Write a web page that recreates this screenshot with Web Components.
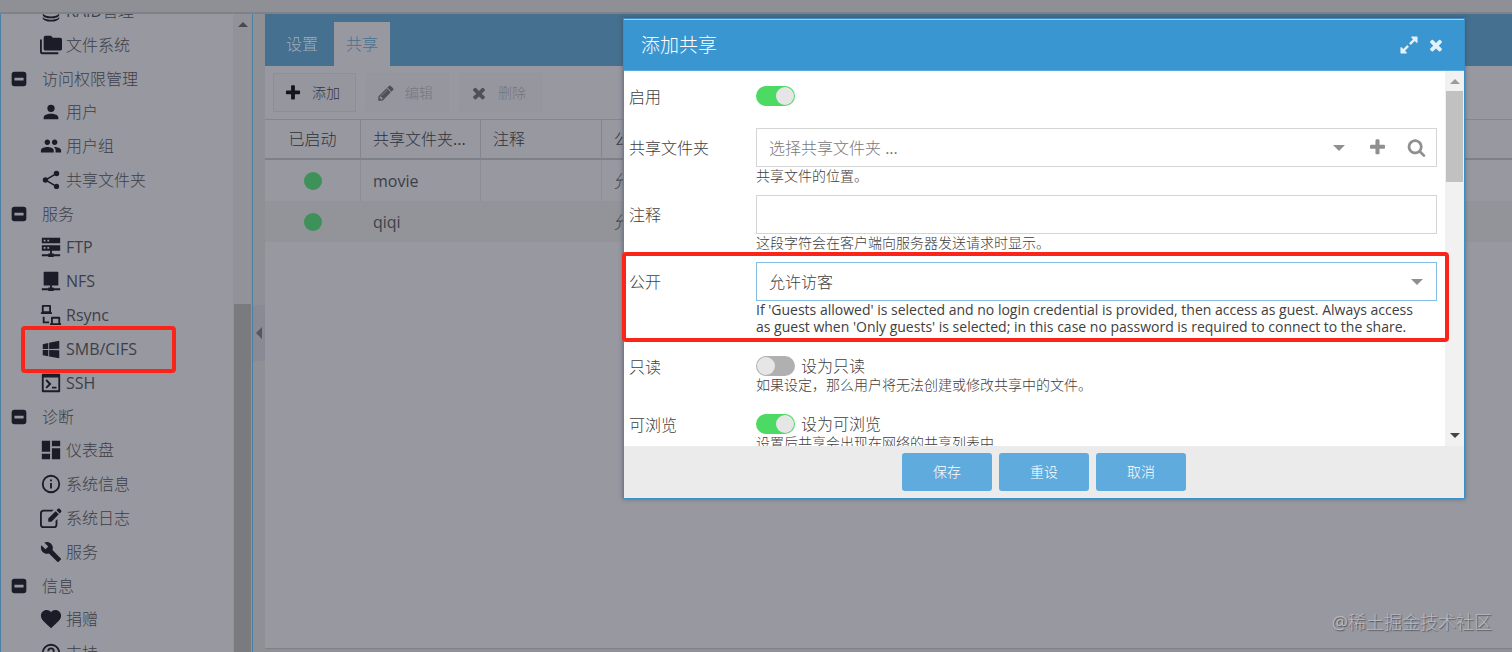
<!DOCTYPE html>
<html lang="zh-CN">
<head>
<meta charset="utf-8">
<title>SMB/CIFS</title>
<style>
  html, body {
    height: 100%;
    margin: 0;
  }

  body {
    font: 16px/24px "Open Sans", "Noto Sans CJK SC Light", "Noto Sans CJK SC DemiLight", "Noto Sans CJK SC", sans-serif;
    background-color: #8e9095;
    color: #3d3f48;
    overflow: hidden;
  }
</style>
</head>
<body>
<nas-workspace></nas-workspace>

<script>
const ICONS = {
  database: [24, 'M12 2C7.6 2 4 3.8 4 6s3.600 4 8 4 8-1.800 8-4-3.600-4-8-4M4 8.500v2.500c0 2.200 3.600 4 8 4s8-1.800 8-4V8.500c0 2.200-3.600 4-8 4s-8-1.800-8-4M3 14v2c0 2.400 4 4 9 4s9-1.600 9-4v-2c0 2.200-4 4-9 4s-9-1.800-9-4M3 18.500v1c0 2.200 4 4 9 4s9-1.800 9-4v-1c-1 1.900-5 3-9 3s-8-1.100-9-3'],
  folders: [24, 'M22,4H14L12,2H6A2,2 0 0,0 4,4V16A2,2 0 0,0 6,18H22A2,2 0 0,0 24,16V6A2,2 0 0,0 22,4M2,6H0V20A2,2 0 0,0 2,22H20V20H2V6Z'],
  collapse: [24, 'M7 4h10a3 3 0 0 1 3 3v10a3 3 0 0 1-3 3H7a3 3 0 0 1-3-3V7a3 3 0 0 1 3-3M7 10.500v3h10v-3Z'],
  user: [24, 'M12,4A4,4 0 0,1 16,8A4,4 0 0,1 12,12A4,4 0 0,1 8,8A4,4 0 0,1 12,4M12,14C16.42,14 20,15.79 20,18V20H4V18C4,15.79 7.58,14 12,14Z'],
  group: [24, 'M16 11c1.660 0 2.990-1.340 2.990-3S17.660 5 16 5c-1.660 0-3 1.340-3 3s1.340 3 3 3zm-8 0c1.660 0 2.990-1.340 2.990-3S9.660 5 8 5C6.340 5 5 6.340 5 8s1.340 3 3 3zm0 2c-2.330 0-7 1.170-7 3.500V19h14v-2.500c0-2.330-4.670-3.500-7-3.500zm8 0c-.29 0-.62.02-.97.05 1.160.84 1.970 1.970 1.970 3.450V19h6v-2.500c0-2.330-4.670-3.500-7-3.500z'],
  share: [24, 'M18,16.08C17.24,16.08 16.56,16.38 16.04,16.85L8.91,12.7C8.96,12.47 9,12.24 9,12C9,11.76 8.96,11.53 8.91,11.3L15.96,7.19C16.5,7.69 17.21,8 18,8A3,3 0 0,0 21,5A3,3 0 0,0 18,2A3,3 0 0,0 15,5C15,5.24 15.04,5.47 15.09,5.7L8.04,9.81C7.5,9.31 6.79,9 6,9A3,3 0 0,0 3,12A3,3 0 0,0 6,15C6.79,15 7.5,14.69 8.04,14.19L15.16,18.34C15.11,18.55 15.08,18.77 15.08,19C15.08,20.61 16.39,21.91 18,21.91C19.61,21.91 20.92,20.61 20.92,19A2.92,2.92 0 0,0 18,16.08Z'],
  ftp: [24, 'M2 2h20v6H2ZM4 4v2h2V4ZM8 4v2h2V4ZM2 10h20v6H2ZM4 12v2h2v-2ZM8 12v2h2v-2ZM11 16h2v3h2v1h7v2h-7v1H9v-1H2v-2h7v-1h2Z'],
  nfs: [24, 'M5 2h14a1 1 0 0 1 1 1v13a1 1 0 0 1-1 1h-6v2h2v1h7v2h-7v1H9v-1H2v-2h7v-1h2v-2H5a1 1 0 0 1-1-1V3a1 1 0 0 1 1-1Z'],
  rsync: [24, 'M3 1h8a1 1 0 0 1 1 1v7h1v2H1V9h1V2a1 1 0 0 1 1-1M4 3v5h6V3ZM3 14h2v5h5v2H3ZM13 14h8a1 1 0 0 1 1 1v6h1v2H11v-2h1v-6a1 1 0 0 1 1-1M14 16v5h6v-5Z'],
  windows: [24, 'M3,12V6.75L9,5.43V11.91L3,12M21,3V11.75L10,11.9V5.21L21,3M3,13L9,13.09V19.9L3,18.75V13M21,13.25V22L10,20.09V13.1L21,13.25Z'],
  terminal: [24, 'M3 2h18a1 1 0 0 1 1 1v18a1 1 0 0 1-1 1H3a1 1 0 0 1-1-1V3a1 1 0 0 1 1-1M4 6v14h16V6ZM6 9.500l1.500-1.500 5 5-5 5-1.500-1.500 3.500-3.500ZM13 16h5v2h-5Z'],
  dashboard: [24, 'M13,2V8H22V2M13,22H22V10H13M2,22H11V16H2M2,14H11V2H2V14Z'],
  info: [24, 'M11 9h2V7h-2M12 20a8 8 0 1 1 0-16 8 8 0 0 1 0 16M12 2a10 10 0 1 0 0 20 10 10 0 0 0 0-20M11 17h2v-6h-2Z'],
  edit: [24, 'M4 3h11l-2 2H4a2 2 0 0 0-2 2v12a2 2 0 0 0 2 2h11a2 2 0 0 0 2-2v-4l2-2v6a4 4 0 0 1-4 4H4a4 4 0 0 1-4-4V7a4 4 0 0 1 4-4M9 12.500 17 4.500l3.500 3.500-8 8H9ZM18 3.500l1.500-1.500q1-.8 2 0l1.500 1.500q.8 1 0 2L21.500 7Z'],
  wrench: [24, 'M22.7,19L13.6,9.9C14.5,7.6 14,4.9 12.1,3C10.1,1 7.1,0.6 4.7,1.7L9,6L6,9L1.6,4.7C0.4,7.1 0.9,10.1 2.9,12.1C4.8,14 7.5,14.5 9.8,13.6L18.9,22.7C19.3,23.1 19.9,23.1 20.3,22.7L22.6,20.4C23.1,20 23.1,19.3 22.7,19Z'],
  heart: [24, 'M12,22L10.55,20.6C5,15.7 1,12.6 1,8.5C1,5 3.8,2.300 7.2,2.300C9.1,2.300 10.91,3.2 12,4.6C13.09,3.2 14.9,2.300 16.8,2.300C20.2,2.300 23,5 23,8.5C23,12.6 19,15.7 13.45,20.6L12,22Z'],
  help: [24, 'M11,18H13V16H11V18M12,2A10,10 0 0,0 2,12A10,10 0 0,0 12,22A10,10 0 0,0 22,12A10,10 0 0,0 12,2M12,20C7.59,20 4,16.41 4,12C4,7.59 7.59,4 12,4C16.41,4 20,7.59 20,12C20,16.41 16.41,20 12,20M12,6A4,4 0 0,0 8,10H10A2,2 0 0,1 12,8A2,2 0 0,1 14,10C14,12 11,11.75 11,15H13C13,12.75 16,12.5 16,10A4,4 0 0,0 12,6Z'],
  plus: [1792, 'M1600 736v192q0 40-28 68t-68 28h-416v416q0 40-28 68t-68 28h-192q-40 0-68-28t-28-68v-416h-416q-40 0-68-28t-28-68v-192q0-40 28-68t68-28h416v-416q0-40 28-68t68-28h192q40 0 68 28t28 68v416h416q40 0 68 28t28 68z'],
  pencil: [1792, 'M491 1536l91-91-235-235-91 91v107h128v128h107zm523-928q0-22-22-22-10 0-17 7l-542 542q-7 7-7 17 0 22 22 22 10 0 17-7l542-542q7-7 7-17zm-54-192l416 416-832 832h-416v-416zm683 96q0 53-37 90l-166 166-416-416 166-165q36-38 90-38 53 0 91 38l235 234q37 39 37 91z'],
  times: [1792, 'M1490 1322q0 40-28 68l-136 136q-28 28-68 28t-68-28l-294-294-294 294q-28 28-68 28t-68-28l-136-136q-28-28-28-68t28-68l294-294-294-294q-28-28-28-68t28-68l136-136q28-28 68-28t68 28l294 294 294-294q28-28 68-28t68 28l136 136q28 28 28 68t-28 68l-294 294 294 294q28 28 28 68z'],
  search: [1792, 'M1216 832q0-185-131.500-316.500t-316.500-131.500-316.500 131.500-131.500 316.500 131.500 316.500 316.500 131.500 316.500-131.500 131.500-316.500zm512 832q0 52-38 90t-90 38q-54 0-90-38l-343-342q-179 124-399 124-143 0-273.500-55.500t-225-150-150-225-55.500-273.500 55.500-273.500 150-225 225-150 273.500-55.500 273.500 55.500 225 150 150 225 55.500 273.500q0 220-124 399l343 343q37 37 37 90z'],
  expand: [1792, 'M883 1056q0 13-10 23l-332 332 144 144q19 19 19 45t-19 45-45 19h-448q-26 0-45-19t-19-45v-448q0-26 19-45t45-19 45 19l144 144 332-332q10-10 23-10t23 10l114 114q10 10 10 23zm781-864v448q0 26-19 45t-45 19-45-19l-144-144-332 332q-10 10-23 10t-23-10l-114-114q-10-10-10-23t10-23l332-332-144-144q-19-19-19-45t19-45 45-19h448q26 0 45 19t19 45z'],
  caret: [12, 'M0 3h12l-6 6Z'],
  up: [12, 'M1 9h10L6 4Z'],
  left: [12, 'M9 0v12L3 6Z'],
};

class NasIcon extends HTMLElement {
  connectedCallback() {
    const [box, path] = ICONS[this.getAttribute('name')];
    const size = this.getAttribute('size') || 22;
    this.attachShadow({ mode: 'open' }).innerHTML = `
    <style>
      :host { display: inline-flex; flex: none; }
      svg { display: block; fill: currentColor; fill-rule: evenodd; }
    </style>
    <svg width="${size}" height="${size}" viewBox="0 0 ${box} ${box}" aria-hidden="true"><path d="${path}"/></svg>`;
  }
}
customElements.define('nas-icon', NasIcon);

class ScrollRail extends HTMLElement {
  connectedCallback() {
    this.attachShadow({ mode: 'open' }).innerHTML = `
    <style>
      :host {
        display: flex;
        flex-direction: column;
        align-items: center;
        flex: none;
        width: 19px;
        background-color: var(--rail);
      }
      .cap {
        display: flex;
        align-items: center;
        justify-content: center;
        height: 20px;
        color: var(--cap);
      }
      .cap.end { color: #444; transform: scaleY(-1); }
      .gap { flex: var(--before, 0); }
      .thumb { flex: var(--size, 1); width: 17px; background-color: var(--thumb); }
      .rest { flex: var(--after, 0); }
    </style>
    <div class="cap"><nas-icon name="up" size="12"></nas-icon></div>
    <div class="gap"></div>
    <div class="thumb"></div>
    <div class="rest"></div>
    ${this.hasAttribute('end-cap') ? '<div class="cap end"><nas-icon name="up" size="12"></nas-icon></div>' : ''}`;
  }
}
customElements.define('scroll-rail', ScrollRail);

class NavItem extends HTMLElement {
  connectedCallback() {
    this.attachShadow({ mode: 'open' }).innerHTML = `
    <style>
      :host { display: block; position: relative; }
      a {
        display: flex;
        align-items: center;
        gap: 4px;
        height: 34px;
        padding-left: 39px;
        color: inherit;
        text-decoration: none;
      }
      nas-icon { color: #1a1c27; }
      :host([group]) a { gap: 12px; height: 33px; padding-left: 7px; }
      :host([marked])::after {
        content: "";
        position: absolute;
        inset: -6px 57px -7px 20px;
        border: 4px solid #fb2419;
        border-radius: 4px;
      }
    </style>
    <a href="#"><nas-icon name="${this.getAttribute('icon') || 'collapse'}"></nas-icon><slot></slot></a>`;
  }
}
customElements.define('nav-item', NavItem);

class NavPanel extends HTMLElement {
  connectedCallback() {
    this.attachShadow({ mode: 'open' }).innerHTML = `
    <style>
      :host {
        display: flex;
        width: 253px;
        flex: none;
        box-sizing: border-box;
        overflow: hidden;
        background-color: #9798a0;
        border: solid #4b7ea3;
        border-width: 0 1px;
      }
      nav { flex: 1; margin-top: -20px; }
      scroll-rail {
        --rail: #929399;
        --cap: #484a50;
        --thumb: #797b7e;
        --before: 270;
        --size: 348;
      }
    </style>
    <nav>
      <nav-item icon="database">RAID管理</nav-item>
      <nav-item icon="folders">文件系统</nav-item>
      <nav-item group>访问权限管理</nav-item>
      <nav-item icon="user">用户</nav-item>
      <nav-item icon="group">用户组</nav-item>
      <nav-item icon="share">共享文件夹</nav-item>
      <nav-item group>服务</nav-item>
      <nav-item icon="ftp">FTP</nav-item>
      <nav-item icon="nfs">NFS</nav-item>
      <nav-item icon="rsync">Rsync</nav-item>
      <nav-item icon="windows" marked>SMB/CIFS</nav-item>
      <nav-item icon="terminal">SSH</nav-item>
      <nav-item group>诊断</nav-item>
      <nav-item icon="dashboard">仪表盘</nav-item>
      <nav-item icon="info">系统信息</nav-item>
      <nav-item icon="edit">系统日志</nav-item>
      <nav-item icon="wrench">服务</nav-item>
      <nav-item group>信息</nav-item>
      <nav-item icon="heart">捐赠</nav-item>
      <nav-item icon="help">支持</nav-item>
    </nav>
    <scroll-rail></scroll-rail>`;
  }
}
customElements.define('nav-panel', NavPanel);

class ToolButton extends HTMLElement {
  connectedCallback() {
    this.attachShadow({ mode: 'open' }).innerHTML = `
    <style>
      :host { display: block; }
      button {
        display: flex;
        align-items: center;
        gap: 10px;
        height: 39px;
        padding: 0 15px 0 10px;
        border: 1px solid #8e8f96;
        background-color: #96979e;
        font: inherit;
        font-size: 14px;
        color: #33353e;
      }
      nas-icon { color: #14161e; }
      button:disabled { border-color: #95969d; color: #75767d; }
      button:disabled nas-icon { color: #505158; }
    </style>
    <button type="button" ${this.hasAttribute('disabled') ? 'disabled' : ''}>
      <nas-icon name="${this.getAttribute('icon')}" size="18"></nas-icon><slot></slot>
    </button>`;
  }
}
customElements.define('tool-button', ToolButton);

class SharePanel extends HTMLElement {
  connectedCallback() {
    this.attachShadow({ mode: 'open' }).innerHTML = `
    <style>
      :host {
        display: flex;
        flex-direction: column;
        flex: 1;
        min-width: 0;
        background-color: #9798a0;
        border-bottom: 1px solid #7f8188;
      }
      .tabs {
        display: flex;
        align-items: flex-end;
        gap: 4px;
        height: 52px;
        padding-left: 9px;
        background-color: #46708f;
      }
      .tabs button {
        width: 56px;
        height: 44px;
        padding: 0;
        border: 0;
        background: none;
        font: inherit;
        color: #9fadbb;
      }
      .tabs button[aria-selected="true"] { background-color: #9798a0; color: #46708f; }
      .tools { display: flex; gap: 10px; padding: 7px 8px; }
      table {
        width: 100%;
        border-collapse: separate;
        border-spacing: 0;
        table-layout: fixed;
        border-top: 1px solid #84868c;
      }
      th, td {
        height: 41px;
        box-sizing: border-box;
        padding: 0 12px;
        border-right: 1px solid #8c8e95;
        font-weight: 400;
        text-align: left;
        white-space: nowrap;
        overflow: hidden;
      }
      th { height: 40px; border-right-color: #84868c; border-bottom: 2px solid #7e8087; color: #2f313a; }
      th:last-child, td:last-child { border-right: 0; }
      th:first-child, td:first-child { text-align: center; }
      tbody tr + tr td { background-color: #929499; border-right-color: #929499; }
      .on {
        display: block;
        width: 18px;
        height: 18px;
        margin: auto;
        border-radius: 50%;
        background-color: #3d9159;
      }
    </style>
    <div class="tabs" role="tablist">
      <button type="button" role="tab">设置</button>
      <button type="button" role="tab" aria-selected="true">共享</button>
    </div>
    <div class="tools">
      <tool-button icon="plus">添加</tool-button>
      <tool-button icon="pencil" disabled>编辑</tool-button>
      <tool-button icon="times" disabled>删除</tool-button>
    </div>
    <table>
      <colgroup><col width="96"><col width="120"><col width="121"><col></colgroup>
      <thead><tr><th>已启动</th><th>共享文件夹...</th><th>注释</th><th>公开</th></tr></thead>
      <tbody>
        <tr><td><span class="on"></span></td><td>movie</td><td></td><td>允许访客</td></tr>
        <tr><td><span class="on"></span></td><td>qiqi</td><td></td><td>允许访客</td></tr>
      </tbody>
    </table>`;
  }
}
customElements.define('share-panel', SharePanel);

class FormField extends HTMLElement {
  control() {
    const value = this.getAttribute('value') || '';
    switch (this.getAttribute('type')) {
      case 'switch':
        return `
        <div class="switch">
          <input id="control" type="checkbox" ${this.hasAttribute('checked') ? 'checked' : ''}>
          <label for="control">${value}</label>
        </div>`;
      case 'folder':
        return `
        <div class="box empty">
          <select id="control"><option>${value}</option></select>
          <span class="trigger"><nas-icon name="caret" size="12"></nas-icon></span>
          <button type="button" class="trigger" aria-label="添加"><nas-icon name="plus" size="19"></nas-icon></button>
          <button type="button" class="trigger" aria-label="搜索"><nas-icon name="search" size="19"></nas-icon></button>
        </div>`;
      case 'select':
        return `
        <div class="box focus">
          <select id="control"><option>${value}</option></select>
          <span class="trigger"><nas-icon name="caret" size="12"></nas-icon></span>
        </div>`;
      default:
        return '<div class="box"><input id="control" type="text"></div>';
    }
  }

  connectedCallback() {
    this.attachShadow({ mode: 'open' }).innerHTML = `
    <style>
      :host { display: flex; margin-bottom: 11px; }
      :host([type="switch"]) { padding-top: 10px; min-height: 31px; }
      .name { flex: none; width: 127px; line-height: 40px; }
      :host([type="switch"]) .name { line-height: 22px; }
      .body { flex: 1; min-width: 0; }
      .box {
        display: flex;
        height: 37px;
        border: 1px solid #d5d5d5;
        background-color: #fff;
      }
      .box.focus { border-color: #84bde3; }
      select, input[type="text"] {
        flex: 1;
        min-width: 0;
        padding: 0 12px;
        border: 0;
        outline: 0;
        background: none;
        appearance: none;
        font: inherit;
        color: inherit;
      }
      .empty select { color: #77777b; }
      .trigger {
        display: flex;
        align-items: center;
        justify-content: center;
        width: 39px;
        padding: 0;
        border: 0;
        background: none;
        color: #8f8f8f;
      }
      .switch { display: flex; align-items: center; gap: 6px; height: 20px; }
      .switch input {
        appearance: none;
        width: 39px;
        height: 20px;
        margin: 0;
        padding: 1px;
        border-radius: 10px;
        background-color: #b0b0b0;
      }
      .switch input::before {
        content: "";
        display: block;
        width: 18px;
        height: 18px;
        border-radius: 50%;
        background-color: #e6e6e6;
      }
      .switch input:checked { background-color: #4cd964; }
      .switch input:checked::before { margin-left: auto; }
      .help { padding-right: 8px; font-size: 14px; line-height: 17px; }
    </style>
    <label class="name" for="control">${this.getAttribute('label')}</label>
    <div class="body">
      ${this.control()}
      <div class="help"><slot></slot></div>
    </div>`;
  }
}
customElements.define('form-field', FormField);

class ShareDialog extends HTMLElement {
  connectedCallback() {
    this.attachShadow({ mode: 'open' }).innerHTML = `
    <style>
      :host {
        display: block;
        position: relative;
        box-sizing: border-box;
        width: 842px;
        border: 1px solid #3c8fc6;
        background-color: #fff;
        box-shadow: 0 0 4px rgba(40, 50, 70, 0.5);
        color: #404040;
      }
      header {
        display: flex;
        align-items: center;
        gap: 8px;
        height: 50px;
        padding: 0 19px 0 17px;
        border: solid #a4cfeb;
        border-width: 1px 0;
        border-bottom-color: #5aaade;
        background-color: #3a96d1;
        color: #fff;
      }
      h1 { flex: 1; margin: 0; font-size: 19px; font-weight: 400; }
      header button {
        display: flex;
        padding: 0;
        border: 0;
        background: none;
        color: #e1f0fa;
      }
      .view { display: flex; height: 375px; }
      form { flex: 1; padding: 5px 8px 0 5px; overflow: hidden; }
      scroll-rail {
        --rail: #f1f1f1;
        --cap: #9b9b9b;
        --thumb: #c1c1c1;
        --size: 91;
        --after: 244;
      }
      footer {
        display: flex;
        justify-content: center;
        gap: 7px;
        padding: 7px;
        background-color: #ebebeb;
      }
      footer button {
        width: 90px;
        height: 38px;
        border: 0;
        border-radius: 3px;
        background-color: #5fabde;
        font: inherit;
        font-size: 14px;
        color: #fff;
      }
      .marker {
        position: absolute;
        inset: 233px 15px 156px -2px;
        border: 4px solid #fb2419;
        border-radius: 4px;
        pointer-events: none;
      }
    </style>
    <header>
      <h1>添加共享</h1>
      <button type="button" aria-label="最大化"><nas-icon name="expand" size="20"></nas-icon></button>
      <button type="button" aria-label="关闭"><nas-icon name="times" size="18"></nas-icon></button>
    </header>
    <div class="view">
      <form>
        <form-field type="switch" label="启用" checked></form-field>
        <form-field type="folder" label="共享文件夹" value="选择共享文件夹 ...">共享文件的位置。</form-field>
        <form-field type="text" label="注释">这段字符会在客户端向服务器发送请求时显示。</form-field>
        <form-field type="select" label="公开" value="允许访客">If 'Guests allowed' is selected and no login credential is provided, then access as guest. Always access as guest when 'Only guests' is selected; in this case no password is required to connect to the share.</form-field>
        <form-field type="switch" label="只读" value="设为只读">如果设定，那么用户将无法创建或修改共享中的文件。</form-field>
        <form-field type="switch" label="可浏览" value="设为可浏览" checked>设置后共享会出现在网络的共享列表中</form-field>
      </form>
      <scroll-rail end-cap></scroll-rail>
    </div>
    <footer>
      <button type="button">保存</button>
      <button type="button">重设</button>
      <button type="button">取消</button>
    </footer>
    <div class="marker"></div>`;
  }
}
customElements.define('share-dialog', ShareDialog);

class NasWorkspace extends HTMLElement {
  connectedCallback() {
    this.attachShadow({ mode: 'open' }).innerHTML = `
    <style>
      :host {
        display: flex;
        flex-direction: column;
        position: relative;
        height: 100vh;
        overflow: hidden;
      }
      .top { flex: none; height: 12px; border-bottom: 2px solid #7f8189; }
      .main { display: flex; flex: 1; min-height: 0; }
      .splitter {
        display: flex;
        align-items: center;
        flex: none;
        width: 12px;
      }
      .splitter button {
        display: flex;
        align-items: center;
        width: 12px;
        height: 56px;
        padding: 0;
        border: 0;
        background-color: #898a93;
        color: #55575e;
      }
      share-panel { margin-bottom: 3px; }
      .layer {
        position: absolute;
        inset: 0;
        display: flex;
        align-items: flex-start;
        justify-content: flex-end;
        padding: 18px 47px;
      }
      .credit {
        position: absolute;
        right: 20px;
        bottom: 18px;
        font-size: 18px;
        color: #b9bac0;
        text-shadow: 1px 1px 1px #55565e;
      }
    </style>
    <div class="top"></div>
    <div class="main">
      <nav-panel></nav-panel>
      <div class="splitter"><button type="button" aria-label="折叠"><nas-icon name="left" size="12"></nas-icon></button></div>
      <share-panel></share-panel>
    </div>
    <div class="layer"><share-dialog></share-dialog></div>
    <div class="credit">@稀土掘金技术社区</div>`;
  }
}
customElements.define('nas-workspace', NasWorkspace);
</script>
</body>
</html>
